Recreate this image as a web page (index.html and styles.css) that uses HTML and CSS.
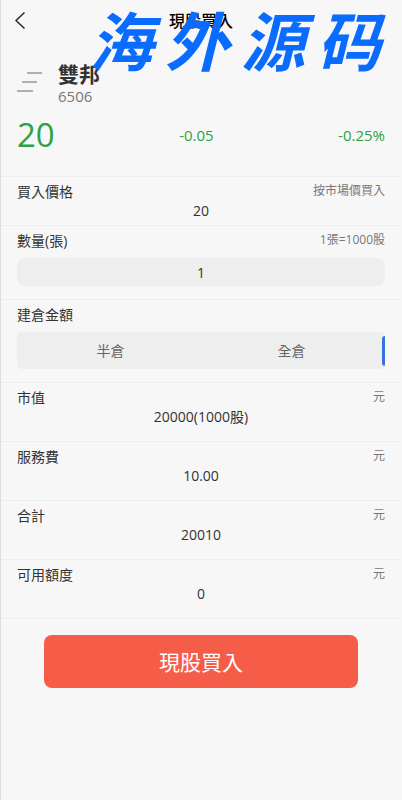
FILE: index.html
```html
<!DOCTYPE html>
<html lang="zh-Hant">
<head>
	<meta charset="UTF-8">
	<meta name="viewport" content="width=device-width, initial-scale=1.0">
	<title>現股買入</title>
	<link rel="stylesheet" href="styles.css">
</head>
<body>
	<div class="page">
		<header class="nav">
			<button class="back" type="button" aria-label="返回">
				<svg width="12" height="18" viewBox="0 0 12 18" fill="none" stroke="#222" stroke-width="1.4"><path d="M10.500 0.500 2 8.500l8.500 8"/></svg>
			</button>
			<h1>現股買入</h1>
		</header>
		<div class="mark" lang="zh-Hans"><span>海</span><span>外</span><span>源</span><span>码</span></div>

		<div class="stock">
			<svg class="menu" width="26" height="24" viewBox="0 0 26 24" stroke="#999" stroke-width="1.5"><path d="M10 1h15M5 10h15M0 19h16"/></svg>
			<div>
				<h2>雙邦</h2>
				<p>6506</p>
			</div>
		</div>
		<div class="quote">
			<span class="now">20</span>
			<span>-0.05</span>
			<span>-0.25%</span>
		</div>

		<form>
			<div class="row price">
				<div class="head"><span>買入價格</span><small>按市場價買入</small></div>
				<p>20</p>
			</div>
			<div class="row amount">
				<div class="head"><label for="num">數量(張)</label><small>1張=1000股</small></div>
				<input id="num" type="text" value="1">
			</div>
			<div class="row open">
				<div class="head"><span>建倉金額</span></div>
				<div class="tabs">
					<button type="button">半倉</button>
					<button type="button">全倉</button>
					<i class="bar"></i>
				</div>
			</div>
			<div class="row">
				<div class="head"><span>市值</span><small>元</small></div>
				<p>20000(1000股)</p>
			</div>
			<div class="row">
				<div class="head"><span>服務費</span><small>元</small></div>
				<p>10.00</p>
			</div>
			<div class="row">
				<div class="head"><span>合計</span><small>元</small></div>
				<p>20010</p>
			</div>
			<div class="row">
				<div class="head"><span>可用額度</span><small>元</small></div>
				<p>0</p>
			</div>
			<button class="btn" type="button">現股買入</button>
		</form>
	</div>
</body>
</html>
```
FILE: styles.css
```css
*{
	box-sizing: border-box;
}
body{
	margin: 0px;
	background: #f7f7f7;
	color: #333;
	font-family: "Open Sans", "Noto Sans CJK TC", sans-serif;
	font-size: 14px;
	line-height: 20px;
}
h1,h2,p{
	margin: 0px;
}
button,input{
	margin: 0px;
	padding: 0px;
	border: none;
	background: none;
	font: inherit;
	color: inherit;
}
button{
	cursor: pointer;
}
.page{
	position: relative;
	min-height: 100vh;
	border-left: 1px solid #ddd;
	border-right: 1px solid #f7f7f7;
}
/* 頂部 */
.nav{
	display: grid;
	grid-template-columns: 40px 1fr 40px;
	align-items: center;
	height: 42px;
	margin-bottom: 2px;
}
.back{
	height: 40px;
	padding-left: 13px;
	text-align: left;
}
.back svg{
	display: block;
}
.nav h1{
	color: #000;
	font-size: 16px;
	font-weight: 500;
	text-align: center;
}
.mark{
	position: absolute;
	top: 0px;
	right: 20px;
	display: flex;
	gap: 12px;
	color: #0a6cff;
	font-family: "Noto Sans CJK SC", sans-serif;
	font-size: 64px;
	font-weight: bold;
	font-style: italic;
	line-height: 76px;
	pointer-events: none;
}
/* 股票 */
.stock{
	display: flex;
	align-items: center;
	gap: 15px;
	padding: 18px 16px 0px;
}
.stock h2{
	font-size: 21px;
	line-height: 24px;
}
.stock p{
	color: #777;
	font-size: 15px;
}
.quote{
	display: flex;
	align-items: center;
	justify-content: space-between;
	height: 71px;
	padding: 0px 16px 12px;
	border-bottom: 1px solid #eee;
	color: #2ba245;
	font-size: 15px;
}
.quote .now{
	font-size: 33px;
}
/* 表單 */
.row{
	min-height: 59px;
	padding: 5px 16px 0px;
	border-bottom: 1px solid #eee;
}
.head{
	display: flex;
	justify-content: space-between;
}
.head small{
	color: #777;
	font-size: 12px;
	line-height: 18px;
}
.row p{
	line-height: 18px;
	text-align: center;
}
.price{
	min-height: 49px;
}
.amount{
	min-height: 74px;
}
.amount input{
	display: block;
	width: 100%;
	height: 28px;
	margin-top: 7px;
	border-radius: 8px;
	background: #eee;
	text-align: center;
}
.open{
	min-height: 83px;
}
.tabs{
	position: relative;
	display: flex;
	height: 37px;
	margin-top: 7px;
	padding-right: 6px;
	border-radius: 5px;
	background: #eee;
	overflow: hidden;
}
.tabs button{
	flex: 1;
	padding-left: 6px;
	color: #666;
}
.bar{
	position: absolute;
	top: 4px;
	right: 0px;
	width: 3px;
	height: 30px;
	border-radius: 3px 0px 0px 3px;
	background: #3574dd;
}
.btn{
	display: block;
	width: calc(100% - 86px);
	height: 53px;
	margin: 16px auto;
	border-radius: 8px;
	background: #f65d48;
	color: #fff;
	font-size: 21px;
}
```
